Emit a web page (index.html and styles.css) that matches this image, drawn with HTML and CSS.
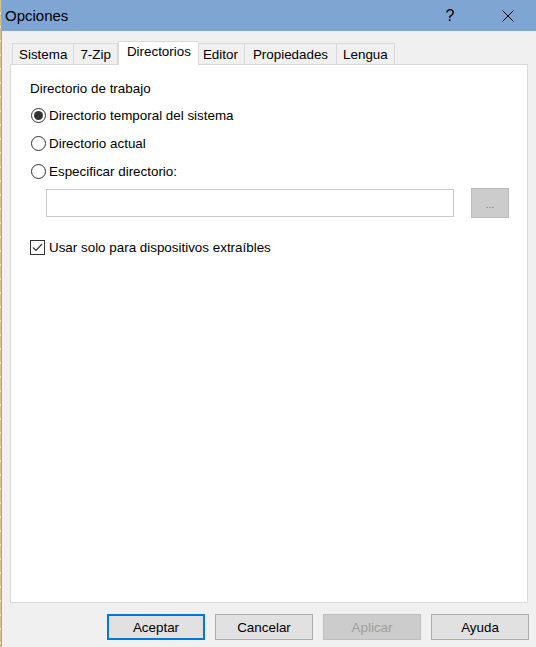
FILE: index.html
```html
<!DOCTYPE html>
<html lang="es">
<head>
<meta charset="utf-8">
<title>Opciones</title>
<link rel="stylesheet" href="styles.css">
</head>
<body>
<div class="window">
  <div class="titlebar">
    <span class="title">Opciones</span>
    <span class="help">?</span>
    <span class="close">
      <svg width="12" height="12" viewBox="0 0 12 12"><path d="M0.5 0.5 L11.5 11.5 M11.5 0.5 L0.5 11.5" stroke="#000" stroke-width="1" fill="none"/></svg>
    </span>
  </div>
  <div class="content">
    <div class="tabs">
      <div class="tab">Sistema</div>
      <div class="tab">7-Zip</div>
      <div class="tab active">Directorios</div>
      <div class="tab">Editor</div>
      <div class="tab wide">Propiedades</div>
      <div class="tab">Lengua</div>
    </div>
    <div class="panel">
      <div class="group-label">Directorio de trabajo</div>
      <div class="option first"><span class="radio on"></span><span>Directorio temporal del sistema</span></div>
      <div class="option"><span class="radio"></span><span>Directorio actual</span></div>
      <div class="option"><span class="radio"></span><span>Especificar directorio:</span></div>
      <div class="path-row">
        <div class="field"></div>
        <div class="browse">...</div>
      </div>
      <div class="check-row">
        <span class="checkbox"><svg width="13" height="13" viewBox="0 0 13 13"><path d="M2 6.5 L5 9.5 L11 3" stroke="#333" stroke-width="1.2" fill="none"/></svg></span>
        <span>Usar solo para dispositivos extraíbles</span>
      </div>
    </div>
    <div class="buttons">
      <div class="btn default">Aceptar</div>
      <div class="btn">Cancelar</div>
      <div class="btn disabled">Aplicar</div>
      <div class="btn">Ayuda</div>
    </div>
  </div>
</div>
</body>
</html>
```

FILE: styles.css
```css
html, body {
  margin: 0;
  padding: 0;
}
body {
  width: 536px;
  height: 647px;
  overflow: hidden;
  font-family: "Liberation Sans", Arial, sans-serif;
  font-size: 13.4px;
  color: #000;
  background: repeating-linear-gradient(to bottom, #d6c28e 0 12px, #e9e3cf 12px 14px);
}
.window {
  margin-left: 1px;
  border-left: 1px solid #8aa9d6;
  height: 647px;
  background: #f0f0f0;
  display: flex;
  flex-direction: column;
}
.titlebar {
  height: 31px;
  flex: none;
  background: #7fa6d3;
  display: flex;
  align-items: center;
  padding-left: 3px;
}
.title {
  font-size: 15px;
}
.help {
  margin-left: auto;
  margin-right: 12px;
  width: 46px;
  text-align: center;
  font-size: 16px;
}
.close {
  width: 46px;
  margin-right: 5px;
  display: flex;
  justify-content: center;
}
.close svg {
  display: block;
}
.content {
  padding: 10px 0 0 8px;
  display: flex;
  flex-direction: column;
}
.tabs {
  display: flex;
  align-items: flex-end;
  height: 23px;
  margin-left: 2px;
}
.tab {
  height: 20px;
  line-height: 21px;
  border: 1px solid #d9d9d9;
  border-bottom: 0;
  padding: 0 6px;
  background: #f0f0f0;
}
.tab + .tab {
  border-left: 0;
}
.tab.wide {
  padding: 0 8px;
}
.tab.active {
  position: relative;
  top: 1px;
  z-index: 1;
  height: 23px;
  line-height: 20px;
  margin: 0 -2px 0 0;
  padding: 0 7px 0 8px;
  border-left: 1px solid #d9d9d9;
  background: #fff;
}
.panel {
  box-sizing: border-box;
  width: 518px;
  height: 539px;
  border: 1px solid #d9d9d9;
  background: #fff;
  padding: 16px 0 0 19px;
}
.group-label {
  line-height: 16px;
}
.option {
  display: flex;
  align-items: center;
  height: 16px;
  margin-top: 12px;
}
.option.first {
  margin-top: 10px;
}
.radio {
  box-sizing: border-box;
  width: 15px;
  height: 15px;
  margin: 0 3px 0 1px;
  border: 1px solid #333;
  border-radius: 50%;
  display: flex;
  align-items: center;
  justify-content: center;
}
.radio.on::after {
  content: "";
  width: 9px;
  height: 9px;
  border-radius: 50%;
  background: #333;
}
.path-row {
  display: flex;
  align-items: center;
  margin-top: 9px;
  padding-left: 16px;
}
.field {
  box-sizing: border-box;
  width: 408px;
  height: 28px;
  border: 1px solid #c8c8c8;
  background: #fff;
}
.browse {
  box-sizing: border-box;
  width: 38px;
  height: 30px;
  margin-left: 17px;
  border: 1px solid #bcbcbc;
  background: #cccccc;
  color: #7a7a7a;
  font-size: 10px;
  text-align: center;
  line-height: 32px;
}
.check-row {
  display: flex;
  align-items: center;
  height: 16px;
  margin-top: 21px;
}
.checkbox {
  box-sizing: border-box;
  width: 15px;
  height: 15px;
  margin-right: 4px;
  border: 1px solid #333;
  background: #fff;
}
.checkbox svg {
  display: block;
}
.buttons {
  display: flex;
  justify-content: flex-end;
  gap: 10px;
  margin-top: 11px;
  padding-right: 7px;
}
.btn {
  box-sizing: border-box;
  width: 98px;
  height: 26px;
  border: 1px solid #adadad;
  background: #e1e1e1;
  display: flex;
  align-items: center;
  justify-content: center;
}
.btn.default {
  border: 2px solid #0078d7;
}
.btn.disabled {
  background: #cccccc;
  border-color: #bfbfbf;
  color: #a0a0a0;
}
```
